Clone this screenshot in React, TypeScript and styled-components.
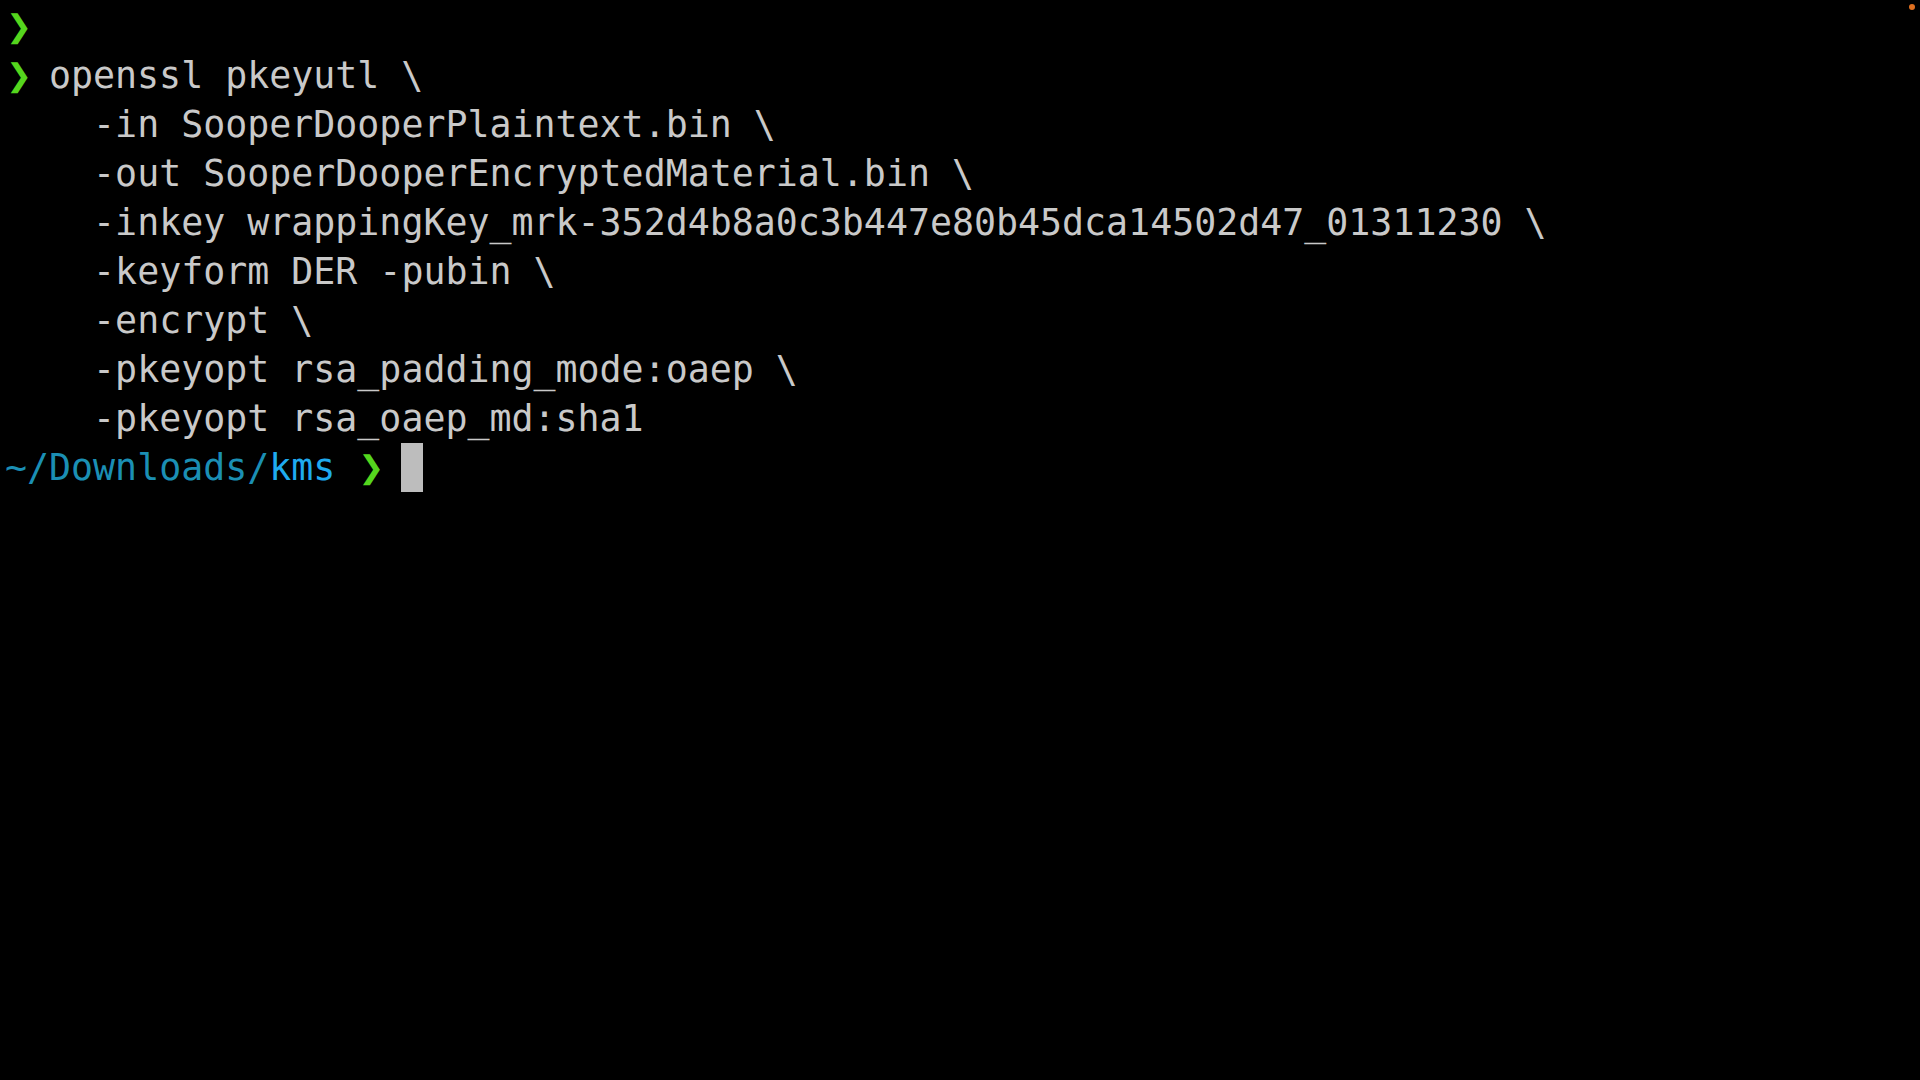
import React from "react";
import styled, { createGlobalStyle } from "styled-components";

const Global = createGlobalStyle`
  html, body { margin: 0; padding: 0; background: #000; }
  body { width: 1920px; height: 1080px; overflow: hidden; }
`;

const Screen = styled.div`
  position: relative;
  width: 1920px;
  height: 1080px;
  background: #000;
  box-sizing: border-box;
  padding: 2px 0 0 5px;
  font-family: "DejaVu Sans Mono", "Liberation Mono", monospace;
  font-size: 36.6px;
  color: #c9c9c9;
`;

const Line = styled.div`
  height: 49px;
  line-height: 49px;
  white-space: pre;
  display: flex;
  align-items: center;
`;

const Text = styled.span<{ $tone?: "plain" | "dir" | "cur" }>`
  white-space: pre;
  color: ${(p) =>
    p.$tone === "dir" ? "#1b8fb4" : p.$tone === "cur" ? "#1fabef" : "#c9c9c9"};
`;

const ChevronCell = styled.span`
  display: inline-flex;
  width: 22px;
  height: 49px;
  padding-left: 1px;
  box-sizing: border-box;
  align-items: center;
`;

const Chevron = styled.span`
  font-family: "DejaVu Sans", sans-serif;
  font-size: 31px;
  line-height: 49px;
  letter-spacing: -8px;
  color: #55d61e;
`;

const Cell = styled.span`
  display: inline-block;
  width: 22px;
`;

const Cursor = styled.span`
  display: inline-block;
  width: 22px;
  height: 49px;
  background: #bdbdbd;
`;

const Dot = styled.div`
  position: absolute;
  top: 4px;
  right: 5px;
  width: 6px;
  height: 6px;
  border-radius: 50%;
  background: #e07020;
`;

const cmdLines = [
  "    -in SooperDooperPlaintext.bin \\",
  "    -out SooperDooperEncryptedMaterial.bin \\",
  "    -inkey wrappingKey_mrk-352d4b8a0c3b447e80b45dca14502d47_01311230 \\",
  "    -keyform DER -pubin \\",
  "    -encrypt \\",
  "    -pkeyopt rsa_padding_mode:oaep \\",
  "    -pkeyopt rsa_oaep_md:sha1",
];

const Prompt = () => (
  <ChevronCell>
    <Chevron>❯</Chevron>
  </ChevronCell>
);

export default function App() {
  return (
    <>
      <Global />
      <Screen>
        <Line>
          <Prompt />
        </Line>
        <Line>
          <Prompt />
          <Cell />
          <Text>openssl pkeyutl \</Text>
        </Line>
        {cmdLines.map((l, i) => (
          <Line key={i}>
            <Text>{l}</Text>
          </Line>
        ))}
        <Line>
          <Text $tone="dir">~/Downloads/</Text>
          <Text $tone="cur">kms</Text>
          <Cell />
          <Prompt />
          <Cell />
          <Cursor />
        </Line>
        <Dot />
      </Screen>
    </>
  );
}
